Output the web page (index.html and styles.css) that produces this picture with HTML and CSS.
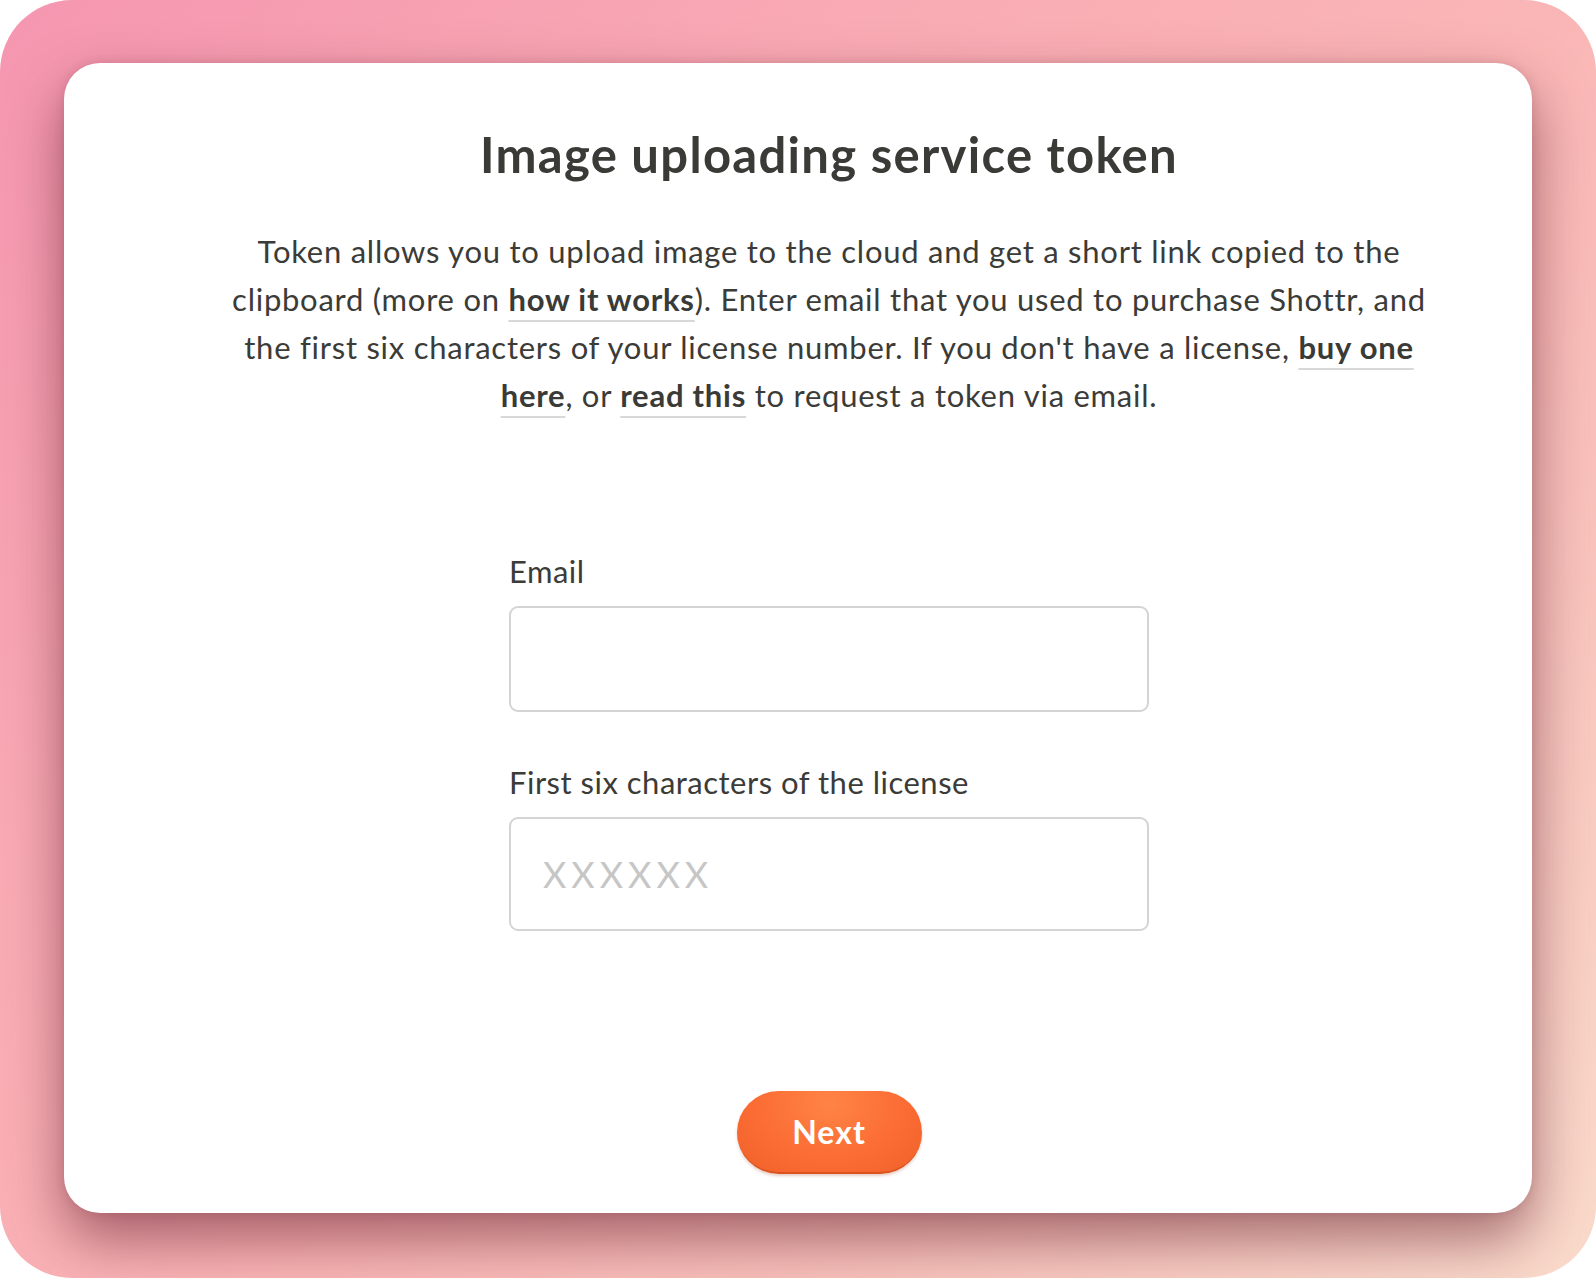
FILE: index.html
```html
<!DOCTYPE html>
<html lang="en">
<head>
<meta charset="utf-8">
<title>Image uploading service token</title>
<link rel="stylesheet" href="styles.css">
</head>
<body>
<div class="frame">
  <div class="card">
    <div class="content">
      <h1 class="title">Image uploading service token</h1>
      <p class="intro">Token allows you to upload image to the cloud and get a short link copied to the<br>clipboard (more on <a class="link" href="#">how it works</a>). Enter email that you used to purchase Shottr, and<br>the first six characters of your license number. If you don't have a license, <a class="link" href="#">buy one<br>here</a>, or <a class="link" href="#">read this</a> to request a token via email.</p>
      <form class="form">
        <label class="field">
          <span class="label">Email</span>
          <input class="input input-email" type="text">
        </label>
        <label class="field field-license">
          <span class="label">First six characters of the license</span>
          <input class="input input-license" type="text" placeholder="XXXXXX">
        </label>
      </form>
      <button class="next" type="button">Next</button>
    </div>
  </div>
</div>
</body>
</html>
```

FILE: styles.css
```css
html, body {
  margin: 0;
  padding: 0;
  background: #ffffff;
}

.frame {
  width: 1596px;
  height: 1278px;
  box-sizing: border-box;
  padding: 63px 64px 65px 64px;
  border-radius: 72px;
  background: linear-gradient(135deg, #f596b0 0%, #f9aab4 30%, #fab6b6 55%, #f9c4bd 75%, #fadbcc 100%);
  overflow: hidden;
}

.card {
  height: 1150px;
  background: #ffffff;
  border-radius: 36px;
  box-shadow: 0 0 10px rgba(130, 50, 70, 0.18), 0 26px 56px rgba(95, 25, 40, 0.55);
  box-sizing: border-box;
  padding: 62px 0 0 62px;
  font-family: "Lato", "Open Sans", sans-serif;
  color: #3b3b38;
}

.content {
  display: flex;
  flex-direction: column;
  align-items: center;
}

.title {
  margin: 0;
  font-size: 49px;
  line-height: 58px;
  font-weight: 700;
  color: #3a3a37;
  letter-spacing: 1.3px;
}

.intro {
  margin: 44px 0 0 0;
  width: 1300px;
  text-align: center;
  font-size: 31px;
  line-height: 48px;
  font-weight: 400;
  letter-spacing: 0.75px;
  color: #3b3b38;
}

.link {
  color: #3a3a37;
  font-weight: 700;
  text-decoration: underline;
  text-decoration-color: #d8d8d8;
  text-decoration-thickness: 2px;
  text-underline-offset: 9px;
}

.form {
  margin-top: 134px;
  width: 640px;
  display: flex;
  flex-direction: column;
  gap: 52px;
}

.field {
  display: flex;
  flex-direction: column;
  gap: 17px;
}

.label {
  font-size: 31px;
  line-height: 36px;
  letter-spacing: 0.5px;
  color: #3b3b38;
  padding-left: 0;
}

.input {
  box-sizing: border-box;
  width: 640px;
  height: 106px;
  border: 2px solid #d4d4d4;
  border-radius: 9px;
  background: #ffffff;
  padding: 0 32px;
  font-family: "Lato", "Open Sans", sans-serif;
  font-size: 30px;
  color: #3b3b38;
  outline: none;
}

.input-license {
  height: 114px;
  font-size: 36px;
  letter-spacing: 5px;
}

.input-license::placeholder {
  color: #c6c6c6;
  font-weight: 400;
}

.next {
  margin-top: 160px;
  width: 185px;
  height: 83px;
  border-radius: 42px;
  border: none;
  border-bottom: 2px solid #d9541f;
  background: radial-gradient(ellipse at 50% 15%, #ff8445 0%, #fb6d34 55%, #f0612b 100%);
  box-shadow: 0 2px 3px rgba(160, 60, 30, 0.25);
  color: #ffffff;
  font-family: "Lato", "Open Sans", sans-serif;
  font-size: 32px;
  font-weight: 700;
  letter-spacing: 1px;
  padding: 0;
  cursor: pointer;
}
```
